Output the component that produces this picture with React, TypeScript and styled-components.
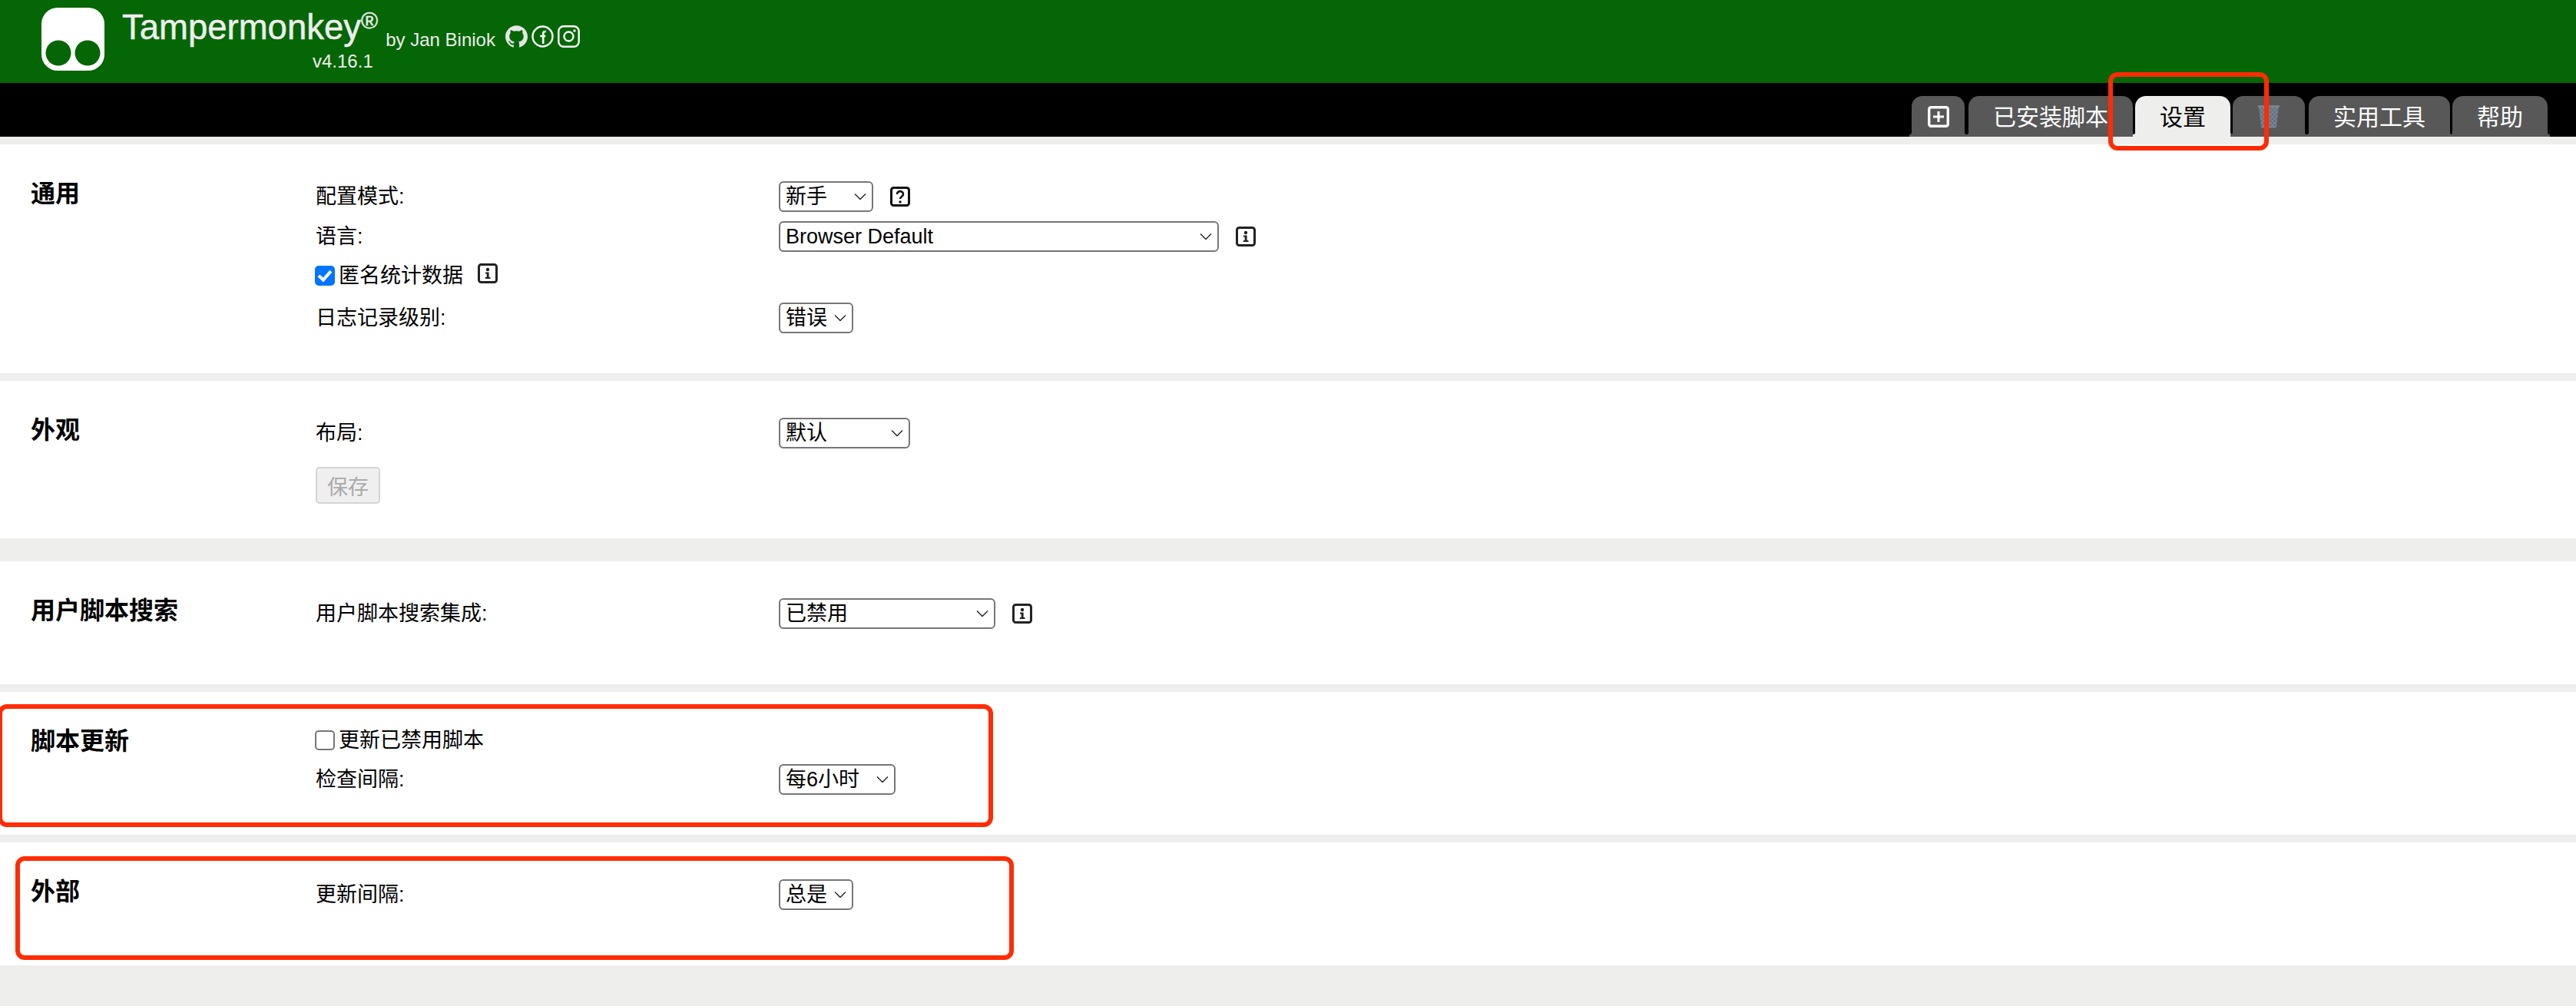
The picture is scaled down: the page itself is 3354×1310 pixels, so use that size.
import React from 'react'
import styled, { createGlobalStyle } from 'styled-components'
import { SiGithub } from 'react-icons/si'

const GlobalStyle = createGlobalStyle`
  html, body {
    margin: 0;
    padding: 0;
    background: #eeeeec;
    font-family: "Liberation Sans", "Noto Sans CJK SC", sans-serif;
    color: #000;
  }
`

const Page = styled.div`
  position: relative;
  width: 3354px;
  height: 1310px;
  overflow: hidden;
  background: #eeeeec;
`

const TopBar = styled.header`
  display: flex;
  align-items: flex-start;
  height: 108px;
  padding: 10px 0 0 54px;
  box-sizing: border-box;
  background: #056605;
  color: #eeeeee;
`

const Logo = styled.svg`
  width: 82px;
  height: 82px;
  margin-right: 23px;
  flex: none;
`

const Brand = styled.div`
  display: flex;
  flex-direction: column;
`

const BrandLine = styled.div`
  display: flex;
  align-items: flex-start;
  height: 56px;
`

const BrandName = styled.span`
  font-size: 45.5px;
  line-height: 52px;
  -webkit-text-stroke: 0.5px #eeeeee;
`

const Reg = styled.sup`
  font-size: 30px;
  line-height: 0;
  vertical-align: 14px;
`

const Author = styled.span`
  font-size: 24px;
  line-height: 28px;
  margin: 28px 0 0 10px;
`

const Socials = styled.div`
  display: flex;
  align-items: center;
  gap: 5px;
  margin: 23px 0 0 13px;
  svg {
    width: 29px;
    height: 29px;
    flex: none;
  }
`

const Version = styled.div`
  font-size: 24px;
  line-height: 28px;
  padding-left: 248px;
`

const TabBar = styled.nav`
  display: flex;
  justify-content: flex-end;
  align-items: flex-end;
  gap: 3px;
  height: 70px;
  padding-right: 37px;
  box-sizing: border-box;
  background: #000;
`

const Tab = styled.div<{ $active?: boolean }>`
  position: relative;
  display: flex;
  align-items: center;
  justify-content: center;
  height: 53px;
  padding: 3px 32px 0;
  box-sizing: border-box;
  font-size: 30px;
  line-height: 50px;
  border-radius: 14px 14px 0 0;
  background: ${({ $active }) => ($active ? '#eeeeec' : '#585858')};
  color: ${({ $active }) => ($active ? '#000' : '#fff')};
  --tab: ${({ $active }) => ($active ? '#eeeeec' : '#585858')};

  &::before,
  &::after {
    content: '';
    position: absolute;
    bottom: 0;
    width: 3px;
    height: 6px;
  }
  &::before {
    left: -3px;
    background: radial-gradient(circle at 0 0, transparent 3px, var(--tab) 3.5px);
  }
  &::after {
    right: -3px;
    background: radial-gradient(circle at 100% 0, transparent 3px, var(--tab) 3.5px);
  }
`

const IconTab = styled(Tab)`
  width: 69px;
  padding: 0;
  margin-right: 2px;
`

const TrashTab = styled(Tab)`
  width: 94px;
  padding: 0;
  margin-right: 2px;
`

const Content = styled.main`
  padding-top: 10px;
`

const Section = styled.section<{ $height: number; $after?: number }>`
  display: flex;
  height: ${({ $height }) => $height}px;
  margin-bottom: ${({ $after }) => $after ?? 10}px;
  padding: 48px 0 0 40px;
  box-sizing: border-box;
  background: #fff;
`

const SectionTitle = styled.h2`
  width: 371px;
  flex: none;
  margin: 0;
  font-size: 32px;
  font-weight: 700;
  line-height: 32px;
`

const Rows = styled.div<{ $gap?: number }>`
  display: flex;
  flex-direction: column;
  gap: ${({ $gap }) => $gap ?? 12}px;
`

const Row = styled.div`
  display: grid;
  grid-template-columns: 603px auto;
  align-items: center;
  min-height: 40px;
`

const Label = styled.label`
  font-size: 27px;
  line-height: 40px;
`

const Control = styled.div`
  display: flex;
  align-items: center;
  gap: 22px;
`

const SelectWrap = styled.div<{ $width: number }>`
  position: relative;
  width: ${({ $width }) => $width}px;
  height: 40px;
  flex: none;

  svg {
    position: absolute;
    right: 9px;
    top: 15px;
    width: 16px;
    height: 10px;
    pointer-events: none;
  }
`

const NativeSelect = styled.select`
  appearance: none;
  width: 100%;
  height: 100%;
  margin: 0;
  padding: 0 0 0 7px;
  box-sizing: border-box;
  border: 2px solid #767676;
  border-radius: 6px;
  background: #fff;
  color: #000;
  font-family: inherit;
  font-size: 27px;
`

const CheckRow = styled.div<{ $pad: string }>`
  display: flex;
  align-items: center;
  padding: ${({ $pad }) => $pad};
  font-size: 27px;
  line-height: 26px;
`

const Check = styled.input`
  appearance: none;
  position: relative;
  width: 26px;
  height: 26px;
  margin: 0 5px 0 -1px;
  box-sizing: border-box;
  border: 2px solid #767676;
  border-radius: 5px;
  background: #fff;

  &:checked {
    border-color: #0075ff;
    background: #0075ff;
  }
  &:checked::after {
    content: '';
    position: absolute;
    left: 6px;
    top: 1px;
    width: 6px;
    height: 13px;
    border: solid #fff;
    border-width: 0 4px 4px 0;
    transform: rotate(42deg);
  }
`

const HintIcon = styled.svg<{ $raised?: boolean }>`
  width: 26px;
  height: 26px;
  flex: none;
  margin: ${({ $raised }) => ($raised ? '-6px 0 0 19px' : '0')};
`

const SaveButton = styled.button`
  width: 84px;
  height: 48px;
  padding: 0;
  border: 2px solid #d4d4d4;
  border-radius: 5px;
  background: #efefef;
  color: #aaaaaa;
  font-family: inherit;
  font-size: 27px;
`

const Marker = styled.div<{ $x: number; $y: number; $w: number; $h: number }>`
  position: absolute;
  left: ${({ $x }) => $x}px;
  top: ${({ $y }) => $y}px;
  width: ${({ $w }) => $w}px;
  height: ${({ $h }) => $h}px;
  box-sizing: border-box;
  border: 6px solid #ff2c06;
  border-radius: 12px;
  pointer-events: none;
`

function Select({ width, value }: { width: number; value: string }) {
  return (
    <SelectWrap $width={width}>
      <NativeSelect defaultValue={value}>
        <option>{value}</option>
      </NativeSelect>
      <svg viewBox="0 0 16 10" fill="none" stroke="#222" strokeWidth="1.4">
        <path d="M1 1.5 8 8.5 15 1.5" />
      </svg>
    </SelectWrap>
  )
}

function InfoIcon({ raised }: { raised?: boolean }) {
  return (
    <HintIcon $raised={raised} viewBox="0 0 26 26">
      <rect x="1.5" y="1.5" width="23" height="23" rx="3" fill="none" stroke="#222" strokeWidth="3" />
      <circle cx="13" cy="8" r="2.2" fill="#222" />
      <path d="M10 11.5h4.6V18H16.5v2H9.8v-2h1.9v-4.5H10z" fill="#222" />
    </HintIcon>
  )
}

function HelpIcon() {
  return (
    <HintIcon viewBox="0 0 26 26">
      <rect x="1.5" y="1.5" width="23" height="23" rx="3" fill="none" stroke="#111" strokeWidth="3" />
      <path d="M9 10c0-5.2 8-5.2 8 0 0 3-4 3-4 6" fill="none" stroke="#111" strokeWidth="2.6" />
      <circle cx="13" cy="20" r="1.7" fill="#111" />
    </HintIcon>
  )
}

function FacebookIcon() {
  return (
    <svg viewBox="0 0 29 29" fill="none">
      <circle cx="14.5" cy="14.5" r="13" stroke="#fff" strokeWidth="2.4" />
      <path d="M15.2 24v-13c0-2.2 1-3.2 3.6-3M11.2 14h7" stroke="#fff" strokeWidth="2.6" />
    </svg>
  )
}

function InstagramIcon() {
  return (
    <svg viewBox="0 0 29 29" fill="none">
      <rect x="1.3" y="1.3" width="26.4" height="26.4" rx="6.5" stroke="#fff" strokeWidth="2.4" />
      <circle cx="14.5" cy="14.5" r="6" stroke="#fff" strokeWidth="2.4" />
      <circle cx="22" cy="7" r="1.7" fill="#fff" />
    </svg>
  )
}

function TrashIcon() {
  return (
    <svg width="30" height="30" viewBox="0 0 30 30">
      <defs>
        <pattern id="mesh" width="4" height="4" patternUnits="userSpaceOnUse" patternTransform="rotate(45)">
          <rect width="4" height="4" fill="#62717c" />
          <path d="M0 0H4M0 0V4" stroke="#8d9aa5" strokeWidth="1.1" />
        </pattern>
      </defs>
      <path d="M2 2h26l-3 26a1.5 1.5 0 0 1-1.5 1.2H6.5A1.5 1.5 0 0 1 5 28z" fill="url(#mesh)" />
      <path d="M1 1.5h28" stroke="#7d8a95" strokeWidth="2.4" />
      <path d="M5.4 28.4h19.2" stroke="#6b8cab" strokeWidth="1.6" />
    </svg>
  )
}

export default function App() {
  return (
    <Page>
      <GlobalStyle />
      <TopBar>
        <Logo viewBox="0 0 82 82">
          <rect width="82" height="82" rx="21" fill="#fff" />
          <circle cx="22" cy="59" r="16.5" fill="#056605" />
          <circle cx="60" cy="59" r="16.5" fill="#056605" />
        </Logo>
        <Brand>
          <BrandLine>
            <BrandName>
              Tampermonkey<Reg>®</Reg>
            </BrandName>
            <Author>by Jan Biniok</Author>
            <Socials>
              <SiGithub color="#e6e6e6" />
              <FacebookIcon />
              <InstagramIcon />
            </Socials>
          </BrandLine>
          <Version>v4.16.1</Version>
        </Brand>
      </TopBar>

      <TabBar>
        <IconTab>
          <svg width="28" height="28" viewBox="0 0 28 28" fill="none" stroke="#fff">
            <rect x="1.7" y="1.7" width="24.6" height="24.6" rx="2.5" strokeWidth="3.4" />
            <path d="M14 7v14M7 14h14" strokeWidth="3" />
          </svg>
        </IconTab>
        <Tab>已安装脚本</Tab>
        <Tab $active>设置</Tab>
        <TrashTab>
          <TrashIcon />
        </TrashTab>
        <Tab>实用工具</Tab>
        <Tab>帮助</Tab>
      </TabBar>

      <Content>
        <Section $height={298}>
          <SectionTitle>通用</SectionTitle>
          <Rows>
            <Row>
              <Label>配置模式:</Label>
              <Control>
                <Select width={123} value="新手" />
                <HelpIcon />
              </Control>
            </Row>
            <Row>
              <Label>语言:</Label>
              <Control>
                <Select width={573} value="Browser Default" />
                <InfoIcon />
              </Control>
            </Row>
            <CheckRow $pad="6px 0 10px">
              <Check type="checkbox" defaultChecked />
              匿名统计数据
              <InfoIcon raised />
            </CheckRow>
            <Row>
              <Label>日志记录级别:</Label>
              <Control>
                <Select width={97} value="错误" />
              </Control>
            </Row>
          </Rows>
        </Section>

        <Section $height={205} $after={30}>
          <SectionTitle>外观</SectionTitle>
          <Rows $gap={24}>
            <Row>
              <Label>布局:</Label>
              <Control>
                <Select width={171} value="默认" />
              </Control>
            </Row>
            <div>
              <SaveButton disabled>保存</SaveButton>
            </div>
          </Rows>
        </Section>

        <Section $height={160}>
          <SectionTitle>用户脚本搜索</SectionTitle>
          <Rows>
            <Row>
              <Label>用户脚本搜索集成:</Label>
              <Control>
                <Select width={282} value="已禁用" />
                <InfoIcon />
              </Control>
            </Row>
          </Rows>
        </Section>

        <Section $height={186}>
          <SectionTitle>脚本更新</SectionTitle>
          <Rows>
            <CheckRow $pad="2px 0 6px">
              <Check type="checkbox" />
              更新已禁用脚本
            </CheckRow>
            <Row>
              <Label>检查间隔:</Label>
              <Control>
                <Select width={152} value="每6小时" />
              </Control>
            </Row>
          </Rows>
        </Section>

        <Section $height={160}>
          <SectionTitle>外部</SectionTitle>
          <Rows>
            <Row>
              <Label>更新间隔:</Label>
              <Control>
                <Select width={97} value="总是" />
              </Control>
            </Row>
          </Rows>
        </Section>
      </Content>

      <Marker $x={2745} $y={94} $w={209} $h={102} />
      <Marker $x={-3} $y={917} $w={1296} $h={160} />
      <Marker $x={20} $y={1115} $w={1300} $h={135} />
    </Page>
  )
}
